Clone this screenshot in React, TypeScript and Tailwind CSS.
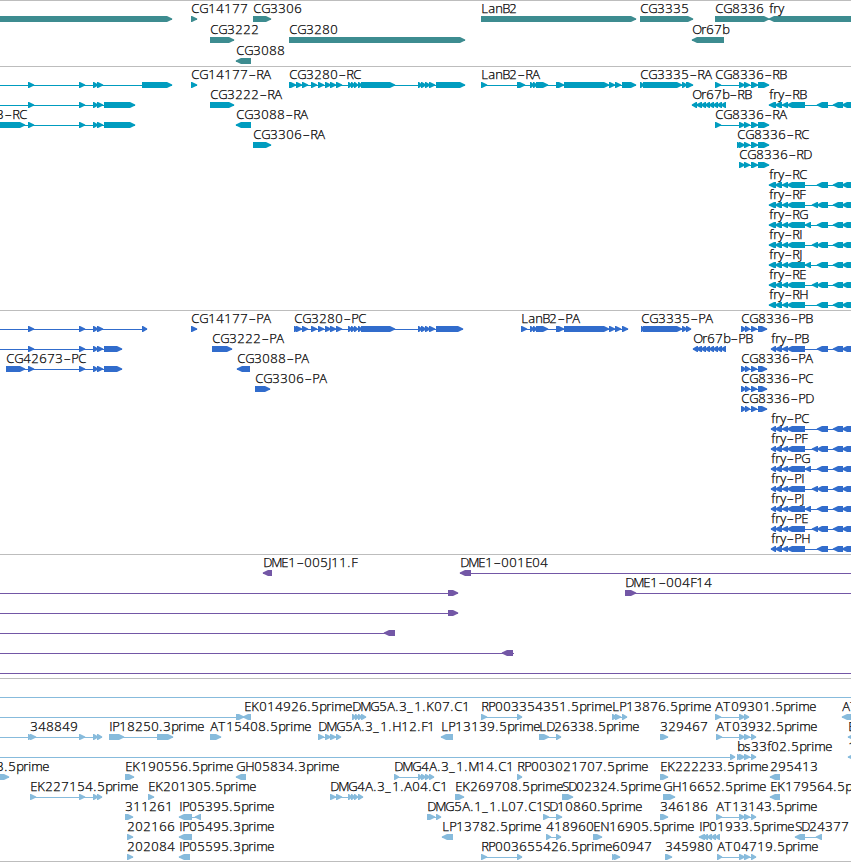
type Span = [number, number];

type Feature = {
  row: number;
  exons: Span[];
  label?: string;
  x?: number;
  rev?: boolean;
  line?: Span;
};

type TrackProps = {
  color: string;
  height: number;
  pitch: number;
  features: Feature[];
};

const WIDTH = 851;

// pixel advance of each character on the label grid
const ADVANCE: Record<string, number> = {
  A: 8, B: 7, C: 8, D: 8, E: 7, F: 6, G: 9, H: 9, I: 3, J: 3, K: 8, L: 7,
  M: 10, N: 9, O: 9, P: 7, R: 7, S: 6, T: 8, a: 7, b: 7, e: 7, f: 4, i: 3,
  m: 11, n: 7, p: 7, r: 5, s: 7, y: 6, ".": 4, "–": 8, _: 7,
};

const f = (
  row: number,
  label: string,
  exons: Span[],
  extra: Partial<Feature> = {}
): Feature => ({ row, label, exons, ...extra });

const REV = { rev: true };

const Label = ({ text, x, y }: { text: string; x: number; y: number }) => {
  let pos = x + 0.3;
  const xs = text.split("").map((ch) => {
    const start = pos;
    pos += ADVANCE[ch] ?? 8;
    return ch === "–" ? start + 0.6 : start;
  });
  return (
    <text x={xs.join(" ")} y={y}>
      {text}
    </text>
  );
};

const Exon = ({ span, y, rev }: { span: Span; y: number; rev?: boolean }) => {
  const [a, b] = span;
  const head = Math.min(b - a - 1, 5);
  const points = rev
    ? `${b},${y} ${a + head},${y} ${a - 0.2},${y + 2.4} ${a - 0.2},${y + 3.6} ${a + head},${y + 6} ${b},${y + 6}`
    : `${a},${y} ${b - head},${y} ${b + 0.2},${y + 2.4} ${b + 0.2},${y + 3.6} ${b - head},${y + 6} ${a},${y + 6}`;
  return <polygon points={points} />;
};

const Track = ({ color, height, pitch, features }: TrackProps) => (
  <section className="border-t border-[#bdbdbd]">
    <svg
      width={WIDTH}
      height={height - 1}
      viewBox={`0 1 ${WIDTH} ${height - 1}`}
      className="block overflow-visible"
    >
      <g fill={color}>
        {features.map((feat, i) => {
          const top = 16 + feat.row * pitch;
          const start = feat.line ? feat.line[0] : feat.exons[0][0];
          const end = feat.line
            ? feat.line[1]
            : feat.exons[feat.exons.length - 1][1];
          return (
            <g key={i}>
              <rect x={start} y={top + 3} width={end - start} height={1} />
              {feat.exons.map((span, j) => (
                <Exon key={j} span={span} y={top} rev={feat.rev} />
              ))}
            </g>
          );
        })}
      </g>
      <g
        fill="#000"
        stroke="#000"
        strokeWidth={0.25}
        className="font-['Open_Sans','Noto_Sans',sans-serif] text-[13px] font-light"
      >
        {features.map((feat, i) =>
          feat.label ? (
            <Label
              key={i}
              text={feat.label}
              x={feat.x ?? feat.exons[0][0]}
              y={13 + feat.row * pitch}
            />
          ) : null
        )}
      </g>
    </svg>
  </section>
);

const genes: Feature[] = [
  f(0, "", [[-10, 172]]),
  f(0, "CG14177", [[191, 197]]),
  f(0, "CG3306", [[253, 271]]),
  f(0, "LanB2", [[481, 636]]),
  f(0, "CG3335", [[640, 693]]),
  f(0, "CG8336", [[715, 769]]),
  f(0, "fry", [[769, 870]], REV),
  f(1, "CG3222", [[210, 234]]),
  f(1, "CG3280", [[289, 465]]),
  f(1, "Or67b", [[692, 724]], REV),
  f(2, "CG3088", [[236, 251]], REV),
];

const cg42673: Span[] = [[28, 34], [79, 85], [93, 98], [97, 103]];
const cg3280: Span[] = [
  [302, 308], [311, 317], [318, 324], [325, 331], [330, 336], [336, 342],
  [348, 352], [351, 355], [354, 358], [358, 362], [361, 395],
  [418, 422], [421, 426], [425, 430], [429, 435],
];
const lanB2: Span[] = [
  [530, 534], [533, 537], [536, 548], [556, 564], [564, 609], [609, 615],
  [615, 621],
];
const cg8336: Span[] = [[739, 745], [744, 750], [751, 758], [758, 769]];
const cg8336Coding: Span[] = [[741, 746], [745, 750], [751, 757], [758, 767]];
const or67b: Span[] = [
  [696, 702], [701, 706], [705, 710], [709, 714], [713, 718], [717, 722],
  [721, 726],
];

// the fry isoforms differ only in one small exon
const fry = (row: number, name: string, start: number, extra: Span[] = []) =>
  f(
    row,
    name,
    [
      [start, 776], [775, 782], [782, 788], [787, 805],
      ...extra,
      [817, 828], [833, 843], [842, 860],
    ],
    REV
  );

const fryA: Span[] = [[812, 818]];
const fryB: Span[] = [[805, 811]];

const transcripts: Feature[] = [
  f(0, "", [...cg42673, [142, 172]], { line: [0, 172] }),
  f(1, "", [...cg42673, [104, 135]], { line: [0, 135] }),
  f(2, "3–RC", [[-10, 25], ...cg42673, [104, 135]], { x: -4 }),
  f(0, "CG14177–RA", [[191, 197]]),
  f(1, "CG3222–RA", [[210, 234]]),
  f(2, "CG3088–RA", [[236, 251]], REV),
  f(3, "CG3306–RA", [[253, 271]]),
  f(0, "CG3280–RC", [[289, 296], [296, 302], ...cg3280, [436, 465]]),
  f(0, "LanB2–RA", [[481, 487], [517, 525], ...lanB2, [622, 636]]),
  f(0, "CG3335–RA", [[640, 644], [643, 682], [682, 687], [686, 693]]),
  f(0, "CG8336–RB", [[715, 721], ...cg8336]),
  f(1, "Or67b–RB", [[692, 697], ...or67b], REV),
  fry(1, "fry–RB", 769),
  f(2, "CG8336–RA", [[715, 721], ...cg8336]),
  f(3, "CG8336–RC", [[737, 741], ...cg8336]),
  f(4, "CG8336–RD", cg8336),
  fry(5, "fry–RC", 769),
  fry(6, "fry–RF", 769, fryA),
  fry(7, "fry–RG", 769, fryB),
  fry(8, "fry–RI", 769, fryA),
  fry(9, "fry–RJ", 769, fryB),
  fry(10, "fry–RE", 769, fryA),
  fry(11, "fry–RH", 769),
];

const proteins: Feature[] = [
  f(0, "", [...cg42673, [142, 147]], { line: [0, 147] }),
  f(1, "", [...cg42673, [104, 122]], { line: [0, 122] }),
  f(2, "CG42673–PC", [[6, 25], ...cg42673, [104, 122]]),
  f(0, "CG14177–PA", [[191, 197]]),
  f(1, "CG3222–PA", [[212, 232]]),
  f(2, "CG3088–PA", [[237, 250]], REV),
  f(3, "CG3306–PA", [[255, 270]]),
  f(0, "CG3280–PC", [[294, 299], [296, 302], ...cg3280, [436, 463]]),
  f(0, "LanB2–PA", [[521, 527], ...lanB2, [622, 628]]),
  f(0, "CG3335–PA", [[641, 644], [643, 682], [682, 687], [686, 691]]),
  f(0, "CG8336–PB", cg8336Coding),
  f(1, "Or67b–PB", [[693, 698], ...or67b], REV),
  fry(1, "fry–PB", 771),
  f(2, "CG8336–PA", cg8336Coding),
  f(3, "CG8336–PC", cg8336Coding),
  f(4, "CG8336–PD", cg8336Coding),
  fry(5, "fry–PC", 771),
  fry(6, "fry–PF", 771, fryA),
  fry(7, "fry–PG", 771, fryB),
  fry(8, "fry–PI", 771, fryA),
  fry(9, "fry–PJ", 771, fryB),
  fry(10, "fry–PE", 771, fryA),
  fry(11, "fry–PH", 771),
];

const clones: Feature[] = [
  f(0, "DME1–005J11.F", [[263, 272]], REV),
  f(0, "DME1–001E04", [[460, 471]], { rev: true, line: [460, WIDTH] }),
  f(1, "", [[448, 458]], { line: [0, 458] }),
  f(1, "DME1–004F14", [[625, 636]], { line: [625, WIDTH] }),
  f(2, "", [[448, 458]], { line: [0, 458] }),
  f(3, "", [[384, 395]], { rev: true, line: [0, 395] }),
  f(4, "", [[502, 513]], { rev: true, line: [0, 514] }),
  f(5, "", [], { line: [0, WIDTH] }),
];

const atTail: Span[] = [[739, 745], [744, 750], [751, 756]];

const ests: Feature[] = [
  f(0, "", [], { line: [0, WIDTH] }),

  f(1, "", [[236, 244]], { line: [0, 244] }),
  f(1, "EK014926.5prime", [[243, 251]], { rev: true, x: 244 }),
  f(1, "DMG5A.3_1.K07.C1", [[352, 356], [355, 359], [358, 362], [361, 366]]),
  f(1, "RP003354351.5prime", [[481, 487], [517, 522]]),
  f(1, "LP13876.5prime", [[612, 617], [615, 621], [622, 627]]),
  f(1, "AT09301.5prime", [[715, 721], [739, 745], [744, 749]]),
  f(1, "AT", [[842, 860]], REV),

  f(2, "348849", [[28, 32], [30, 36], [79, 85], [93, 98], [97, 102]], {
    x: 30,
    line: [0, 102],
  }),
  f(2, "IP18250.3prime", [[109, 124], [157, 173]]),
  f(2, "AT15408.5prime", [[210, 221]]),
  f(2, "DMG5A.3_1.H12.F1", [[318, 324], [325, 331], [330, 336], [336, 341]]),
  f(2, "LP13139.5prime", [[441, 453]], REV),
  f(2, "LD26338.5prime", [[539, 549], [556, 561]]),
  f(2, "329467", [[660, 668]]),
  f(2, "AT03932.5prime", [[716, 722], ...atTail]),
  f(2, "E", [[848, 860]], REV),

  f(3, "", [[730, 735]], { line: [0, 735] }),
  f(3, "bs33f02.5prime", [[737, 741], ...atTail]),
  f(3, "1", [[848, 860]], REV),

  f(4, "3.5prime", [[-6, 9]], { x: -4 }),
  f(4, "EK190556.5prime", [[125, 134]]),
  f(4, "GH05834.3prime", [[236, 246]], REV),
  f(4, "DMG4A.3_1.M14.C1", [
    [394, 399], [418, 422], [421, 426], [425, 430], [429, 434],
  ]),
  f(4, "RP003021707.5prime", [[517, 522]]),
  f(4, "EK222233.5prime", [[660, 668]]),
  f(4, "295413", [[770, 780]], REV),

  f(5, "EK227154.5prime", [[30, 36], [79, 85], [93, 98], [97, 102]]),
  f(5, "EK201305.5prime", [[148, 154]]),
  f(5, "DMG4A.3_1.A04.C1", [
    [330, 336], [336, 342], [348, 352], [351, 355], [354, 358], [358, 363],
  ]),
  f(5, "EK269708.5prime", [[455, 464]]),
  f(5, "SD02324.5prime", [[562, 573]]),
  f(5, "GH16652.5prime", [[663, 675]]),
  f(5, "EK179564.5prime", [[770, 780]], REV),

  f(6, "311261", [[125, 133]]),
  f(6, "IP05395.5prime", [[179, 192], [195, 201]], REV),
  f(6, "DMG5A.1_1.L07.C1", [[427, 435], [436, 441]]),
  f(6, "SD10860.5prime", [[543, 549], [556, 562]]),
  f(6, "346186", [[660, 668]]),
  f(6, "AT13143.5prime", [[716, 722], ...atTail]),

  f(7, "202166", [[127, 133]]),
  f(7, "IP05495.3prime", [[179, 192]], REV),
  f(7, "LP13782.5prime", [[442, 453]], REV),
  f(7, "418960", [[546, 551], [556, 561]]),
  f(7, "EN16905.5prime", [[593, 602]]),
  f(
    7,
    "IP01933.5prime",
    [[699, 705], [703, 708], [707, 712], [711, 716], [715, 720]],
    REV
  ),
  f(7, "SD24377", [[795, 805], [816, 822]], REV),

  f(8, "202084", [[127, 133]]),
  f(8, "IP05595.3prime", [[179, 190]], REV),
  f(8, "RP003655426.5prime", [[481, 487], [517, 522]]),
  f(8, "60947", [[612, 616], [614, 620]]),
  f(8, "345980", [[665, 672]]),
  f(8, "AT04719.5prime", [[717, 722], ...atTail]),
];

const App = () => {
  return (
    <main className="flex h-[862px] w-[851px] flex-col overflow-hidden border-b border-[#bdbdbd] bg-white">
      <Track color="#3d8c90" height={66} pitch={21} features={genes} />
      <Track color="#009cbf" height={244} pitch={20} features={transcripts} />
      <Track color="#316ccc" height={244} pitch={20} features={proteins} />
      <Track color="#7357a6" height={124} pitch={20} features={clones} />
      <Track color="#87bbdc" height={183} pitch={20} features={ests} />
    </main>
  );
};

export default App;
